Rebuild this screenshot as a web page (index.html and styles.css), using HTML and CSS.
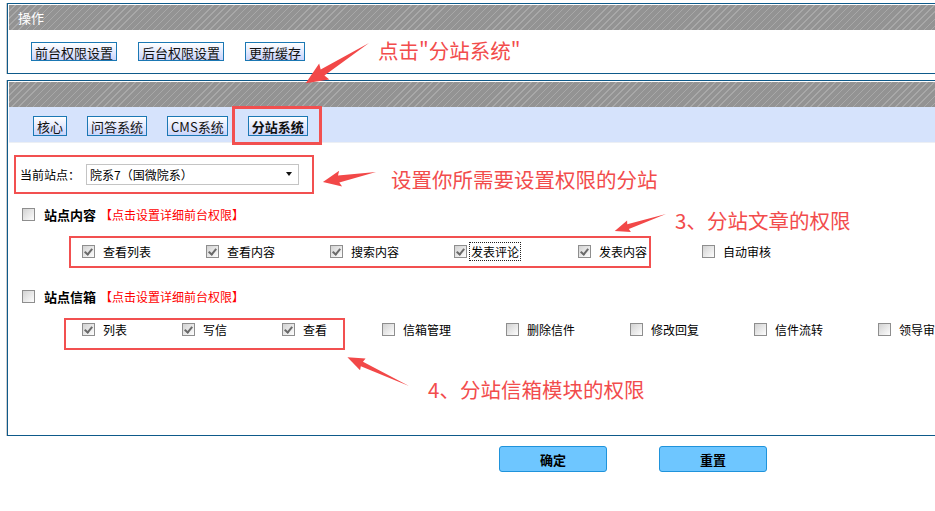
FILE: index.html
```html
<!DOCTYPE html>
<html lang="zh-CN">

<head>
  <meta charset="utf8">
  <title>分站权限设置</title>
  <link rel="stylesheet" href="styles.css">
</head>

<body>
  <div class="page">

    <div class="panel panel-ops">
      <div class="panel-head">操作</div>
      <div class="ops-body">
        <button class="btn">前台权限设置</button>
        <button class="btn">后台权限设置</button>
        <button class="btn">更新缓存</button>
      </div>
    </div>

    <div class="panel panel-perm">
      <div class="panel-head"></div>
      <div class="tabs">
        <button class="tab">核心</button>
        <button class="tab">问答系统</button>
        <button class="tab">CMS系统</button>
        <button class="tab active">分站系统</button>
      </div>
      <div class="perm-body">
        <div class="site-row">
          <span>当前站点：</span>
          <div class="select">
            <span>院系7（国微院系）</span>
            <i class="caret"></i>
          </div>
        </div>

        <div class="group-row">
          <span class="cb"></span>
          <b>站点内容</b>
          <a class="detail-link">【点击设置详细前台权限】</a>
        </div>
        <div class="items items-post">
          <div class="item"><span class="cb on"></span><label>查看列表</label></div>
          <div class="item"><span class="cb on"></span><label>查看内容</label></div>
          <div class="item"><span class="cb on"></span><label>搜索内容</label></div>
          <div class="item item-focus"><span class="cb on"></span><label>发表评论</label></div>
          <div class="item"><span class="cb on"></span><label>发表内容</label></div>
          <div class="item"><span class="cb"></span><label>自动审核</label></div>
        </div>

        <div class="group-row group-mail">
          <span class="cb"></span>
          <b>站点信箱</b>
          <a class="detail-link">【点击设置详细前台权限】</a>
        </div>
        <div class="items items-mail">
          <div class="item short"><span class="cb on"></span><label>列表</label></div>
          <div class="item short"><span class="cb on"></span><label>写信</label></div>
          <div class="item short"><span class="cb on"></span><label>查看</label></div>
          <div class="item"><span class="cb"></span><label>信箱管理</label></div>
          <div class="item"><span class="cb"></span><label>删除信件</label></div>
          <div class="item"><span class="cb"></span><label>修改回复</label></div>
          <div class="item"><span class="cb"></span><label>信件流转</label></div>
          <div class="item"><span class="cb"></span><label>领导审核</label></div>
        </div>
      </div>
    </div>

    <div class="actions">
      <button class="submit">确定</button>
      <button class="submit">重置</button>
    </div>

    <!-- annotations drawn over the screenshot -->
    <div class="mark mark-tab"></div>
    <div class="mark mark-site"></div>
    <div class="mark mark-post"></div>
    <div class="mark mark-mail"></div>

    <div class="note note-click">点击"分站系统"</div>
    <div class="note note-site">设置你所需要设置权限的分站</div>
    <div class="note note-post">3、分站文章的权限</div>
    <div class="note note-mail">4、分站信箱模块的权限</div>

    <svg class="arrows" width="935" height="511" viewBox="0 0 935 511">
      <g fill="#f24848">
        <polygon transform="translate(369 43) rotate(147.6)" points="0,0 55,-3.5 53,-9.5 75,0 53,9.5 55,3.5"></polygon>
        <polygon transform="translate(376 172) rotate(169.3)" points="0,0 38,-3.5 36,-8 54,0 36,8 38,3.5"></polygon>
        <polygon transform="translate(666 214) rotate(161.6)" points="0,0 40,-2.5 39,-6 54,0 39,6 40,2.5"></polygon>
        <polygon transform="translate(409 386) rotate(205.1)" points="0,0 52,-2.5 51,-6.5 68,0 51,6.5 52,2.5"></polygon>
      </g>
    </svg>

  </div>
</body>

</html>
```

FILE: styles.css
```css
* {
  box-sizing: border-box;
}

body {
  margin: 0;
  font: 12px "Noto Sans CJK SC", "Liberation Sans", sans-serif;
  color: #000;
  background: #fff;
  overflow: hidden;
}

div.page {
  position: relative;
  width: 935px;
  height: 511px;
  overflow: hidden;
}

div.panel {
  width: 1000px;
  margin-left: 7px;
  border: 1px solid #0e5a8a;
  padding: 1px;
  box-shadow: -1px 0 0 #cfcfcf;
  background: #fff;
}

div.panel-ops {
  margin-top: 3px;
}

div.panel-perm {
  margin-top: 6px;
}

div.panel-head {
  height: 25px;
  line-height: 25px;
  padding-left: 9px;
  color: #fff;
  font-size: 13px;
  background: repeating-linear-gradient(135deg, #939393 0 4px, #a8a8a8 4px 5px);
}

div.ops-body {
  height: 42px;
  padding: 12px 0 0 22px;
  display: flex;
  align-items: flex-start;
  gap: 21px;
}

button.btn,
button.tab {
  height: 19px;
  padding: 0 3px;
  border: 1px solid #1b78b4;
  background: linear-gradient(#ffffff, #c9d4fb);
  font: 13px "Noto Sans CJK SC", "Liberation Sans", sans-serif;
  color: #111;
  white-space: nowrap;
}

div.tabs {
  height: 36px;
  padding: 9px 0 0 24px;
  display: flex;
  align-items: flex-start;
  gap: 20px;
  background: #d6e3fc;
  border-bottom: 1px solid #eceff4;
}

button.tab {
  height: 20px;
}

button.tab.active {
  font-weight: bold;
}

div.perm-body {
  height: 291px;
  padding-top: 12px;
}

div.site-row {
  height: 38px;
  padding-left: 11px;
  display: flex;
  align-items: center;
  gap: 6px;
}

div.select {
  width: 213px;
  height: 21px;
  border: 1px solid #c4c4c4;
  padding: 0 6px 0 3px;
  display: flex;
  align-items: center;
  justify-content: space-between;
}

i.caret {
  border-top: 4px solid #111;
  border-left: 3.5px solid transparent;
  border-right: 3.5px solid transparent;
}

div.group-row {
  margin-top: 10px;
  height: 23px;
  padding-left: 13px;
  display: flex;
  align-items: center;
}

div.group-row b {
  margin-left: 9px;
  font-size: 13px;
}

a.detail-link {
  margin-left: 4px;
  color: #f00;
  text-decoration: none;
}

div.group-mail {
  margin-top: 18px;
  height: 22px;
}

div.items {
  padding-left: 73px;
  display: flex;
  align-items: center;
}

div.items-post {
  margin-top: 10px;
  height: 31px;
}

div.items-mail {
  margin-top: 7px;
  height: 31px;
}

div.item {
  flex: none;
  width: 124px;
  display: flex;
  align-items: center;
  white-space: nowrap;
}

div.item.short {
  width: 100px;
}

div.item label {
  margin-left: 8px;
}

div.item-focus label {
  margin-left: 3px;
  padding: 0 1px;
  outline: 1px dotted #222;
}

span.cb {
  flex: none;
  width: 13px;
  height: 13px;
  border: 1px solid #8e8e8e;
  background: linear-gradient(135deg, #d2d2d2, #fdfdfd);
  display: flex;
  align-items: center;
  justify-content: center;
}

span.cb.on::after {
  content: "";
  width: 3px;
  height: 6px;
  margin-top: -2px;
  border: solid #6a6a6a;
  border-width: 0 2px 2px 0;
  transform: rotate(40deg);
}

div.actions {
  margin: 10px 0 0 499px;
  display: flex;
  gap: 52px;
}

button.submit {
  width: 108px;
  height: 26px;
  border: 1px solid #1f93db;
  border-radius: 3px;
  background: #6ec6ff;
  font: bold 13px "Noto Sans CJK SC", "Liberation Sans", sans-serif;
  color: #000;
}

div.mark {
  position: absolute;
  border: 2px solid #f25050;
}

div.mark-tab {
  left: 232px;
  top: 106px;
  width: 90px;
  height: 39px;
  border-width: 3px;
}

div.mark-site {
  left: 14px;
  top: 155px;
  width: 300px;
  height: 39px;
}

div.mark-post {
  left: 69px;
  top: 236px;
  width: 582px;
  height: 32px;
}

div.mark-mail {
  left: 64px;
  top: 318px;
  width: 281px;
  height: 32px;
}

div.note {
  position: absolute;
  color: #f24c4c;
  font: 20.5px "Noto Sans CJK SC", "Liberation Sans", sans-serif;
  line-height: 24px;
  white-space: nowrap;
}

div.note-click {
  left: 378px;
  top: 38px;
}

div.note-site {
  left: 391px;
  top: 167px;
}

div.note-post {
  left: 675px;
  top: 208px;
}

div.note-mail {
  left: 428px;
  top: 377px;
}

svg.arrows {
  position: absolute;
  left: 0;
  top: 0;
  pointer-events: none;
}
```
